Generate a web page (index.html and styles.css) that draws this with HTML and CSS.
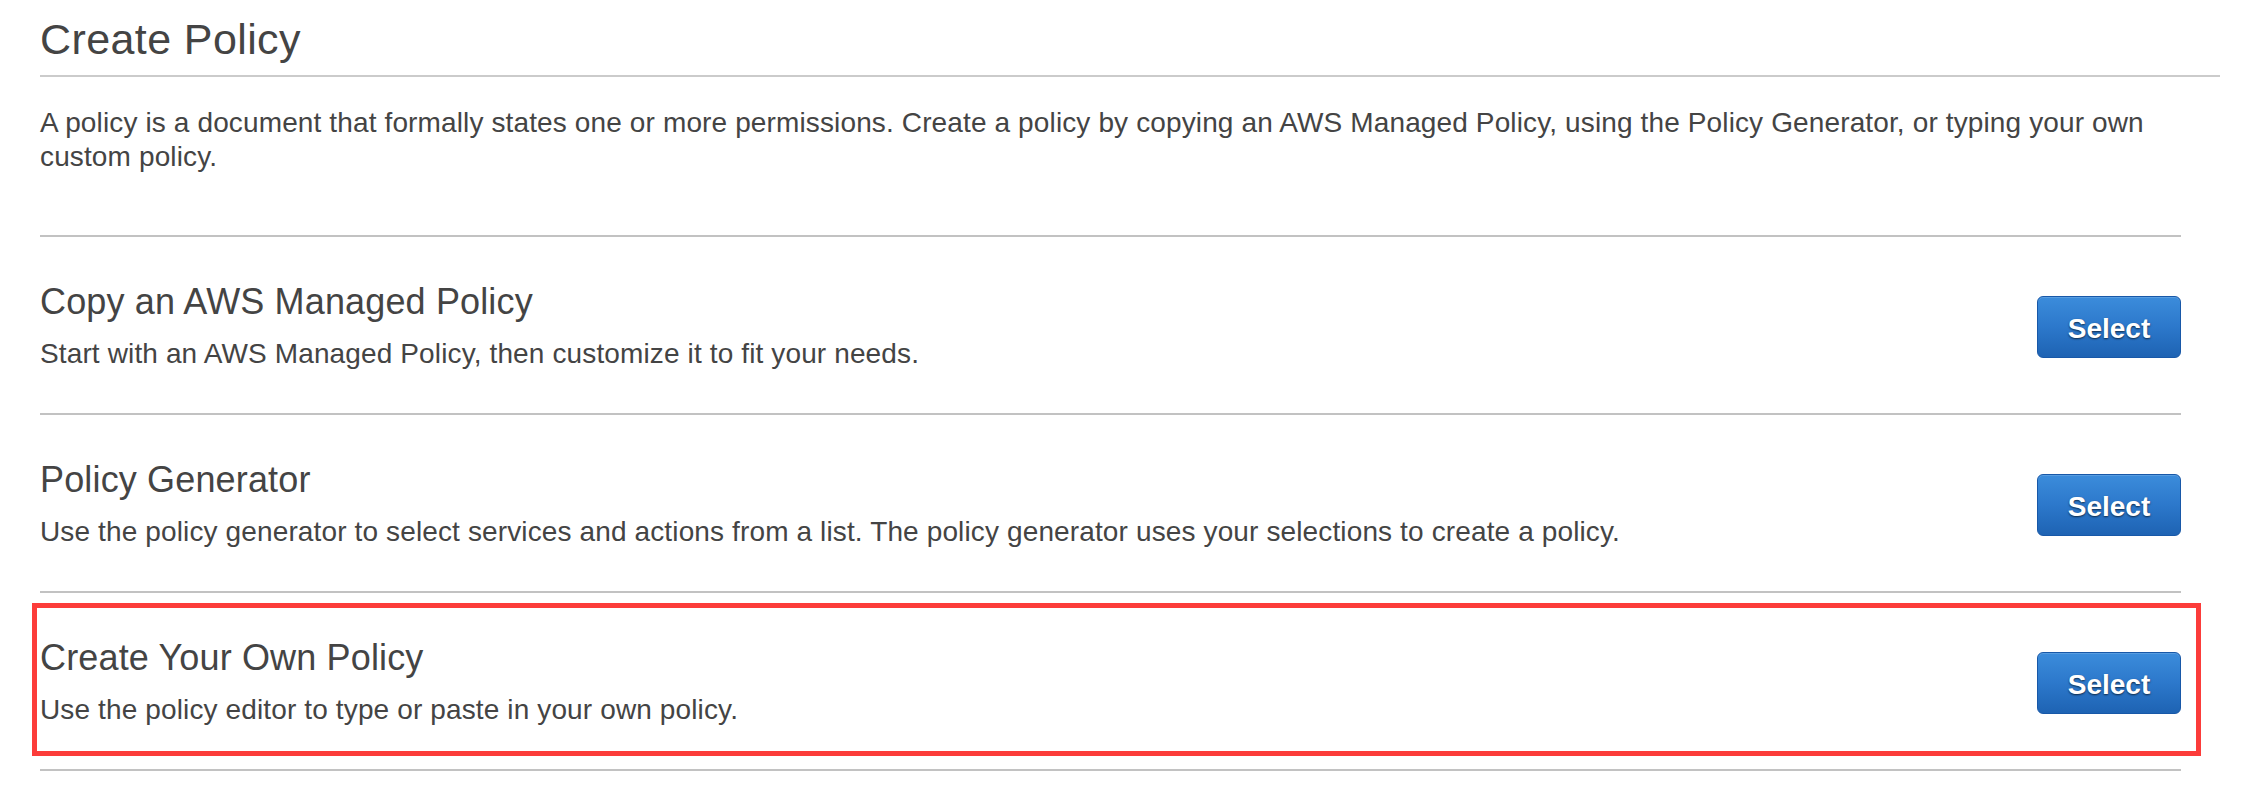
FILE: index.html
```html
<!DOCTYPE html>
<html lang="en">
<head>
<meta charset="utf-8">
<title>Create Policy</title>
<link rel="stylesheet" href="styles.css">
</head>
<body>
<main class="page">
  <h1 class="page-title">Create Policy</h1>
  <p class="intro">A policy is a document that formally states one or more permissions. Create a policy by copying an AWS Managed Policy, using the Policy Generator, or typing your own custom policy.</p>
  <div class="options">
    <section class="option">
      <div class="option-text">
        <h2 class="option-title">Copy an AWS Managed Policy</h2>
        <p class="option-desc">Start with an AWS Managed Policy, then customize it to fit your needs.</p>
      </div>
      <button class="btn-select" type="button">Select</button>
    </section>
    <section class="option">
      <div class="option-text">
        <h2 class="option-title">Policy Generator</h2>
        <p class="option-desc">Use the policy generator to select services and actions from a list. The policy generator uses your selections to create a policy.</p>
      </div>
      <button class="btn-select" type="button">Select</button>
    </section>
    <section class="option option-highlight">
      <div class="option-text">
        <h2 class="option-title">Create Your Own Policy</h2>
        <p class="option-desc">Use the policy editor to type or paste in your own policy.</p>
      </div>
      <button class="btn-select" type="button">Select</button>
    </section>
  </div>
</main>
</body>
</html>
```

FILE: styles.css
```css
html, body {
  margin: 0;
  padding: 0;
  background: #ffffff;
}

body {
  font-family: "Liberation Sans", Arial, Helvetica, sans-serif;
  color: #444444;
}

.page {
  padding: 0 26px 0 40px;
}

.page-title {
  margin: 15px 0 0;
  padding-bottom: 12px;
  font-size: 43px;
  line-height: 48px;
  font-weight: normal;
  letter-spacing: 0.4px;
  color: #444444;
  border-bottom: 2px solid #cbcbcb;
}

.intro {
  margin: 29px 0 61px;
  font-size: 28px;
  line-height: 34px;
  letter-spacing: 0.13px;
}

.options {
  margin-right: 39px;
  border-bottom: 2px solid #c2c2c2;
}

.option {
  position: relative;
  display: flex;
  justify-content: space-between;
  align-items: flex-start;
  padding: 44px 0 42px;
  border-top: 2px solid #c2c2c2;
}

.option-text {
  display: flex;
  flex-direction: column;
  gap: 14px;
}

.option-title {
  margin: 0;
  font-size: 36px;
  line-height: 42px;
  font-weight: normal;
  letter-spacing: 0.15px;
  color: #444444;
}

.option-desc {
  margin: 0;
  font-size: 28px;
  line-height: 34px;
  letter-spacing: 0.13px;
}

.btn-select {
  box-sizing: border-box;
  width: 144px;
  height: 62px;
  margin-top: 15px;
  padding: 2px 0 0;
  border: 1px solid #1858a8;
  border-radius: 6px;
  background: linear-gradient(to bottom, #3b8cdb 0%, #2c78cb 50%, #1e63b3 100%);
  box-shadow: inset 0 1px 0 rgba(255, 255, 255, 0.15);
  font-family: "Liberation Sans", Arial, Helvetica, sans-serif;
  font-size: 28px;
  font-weight: bold;
  line-height: 57px;
  color: #ffffff;
  text-shadow: 0 1px 2px rgba(0, 0, 0, 0.65);
  cursor: pointer;
}

.option-highlight::after {
  content: "";
  position: absolute;
  top: 10px;
  bottom: 13px;
  left: -8px;
  right: -20px;
  border: 5px solid #fc3c3a;
  pointer-events: none;
}
```
